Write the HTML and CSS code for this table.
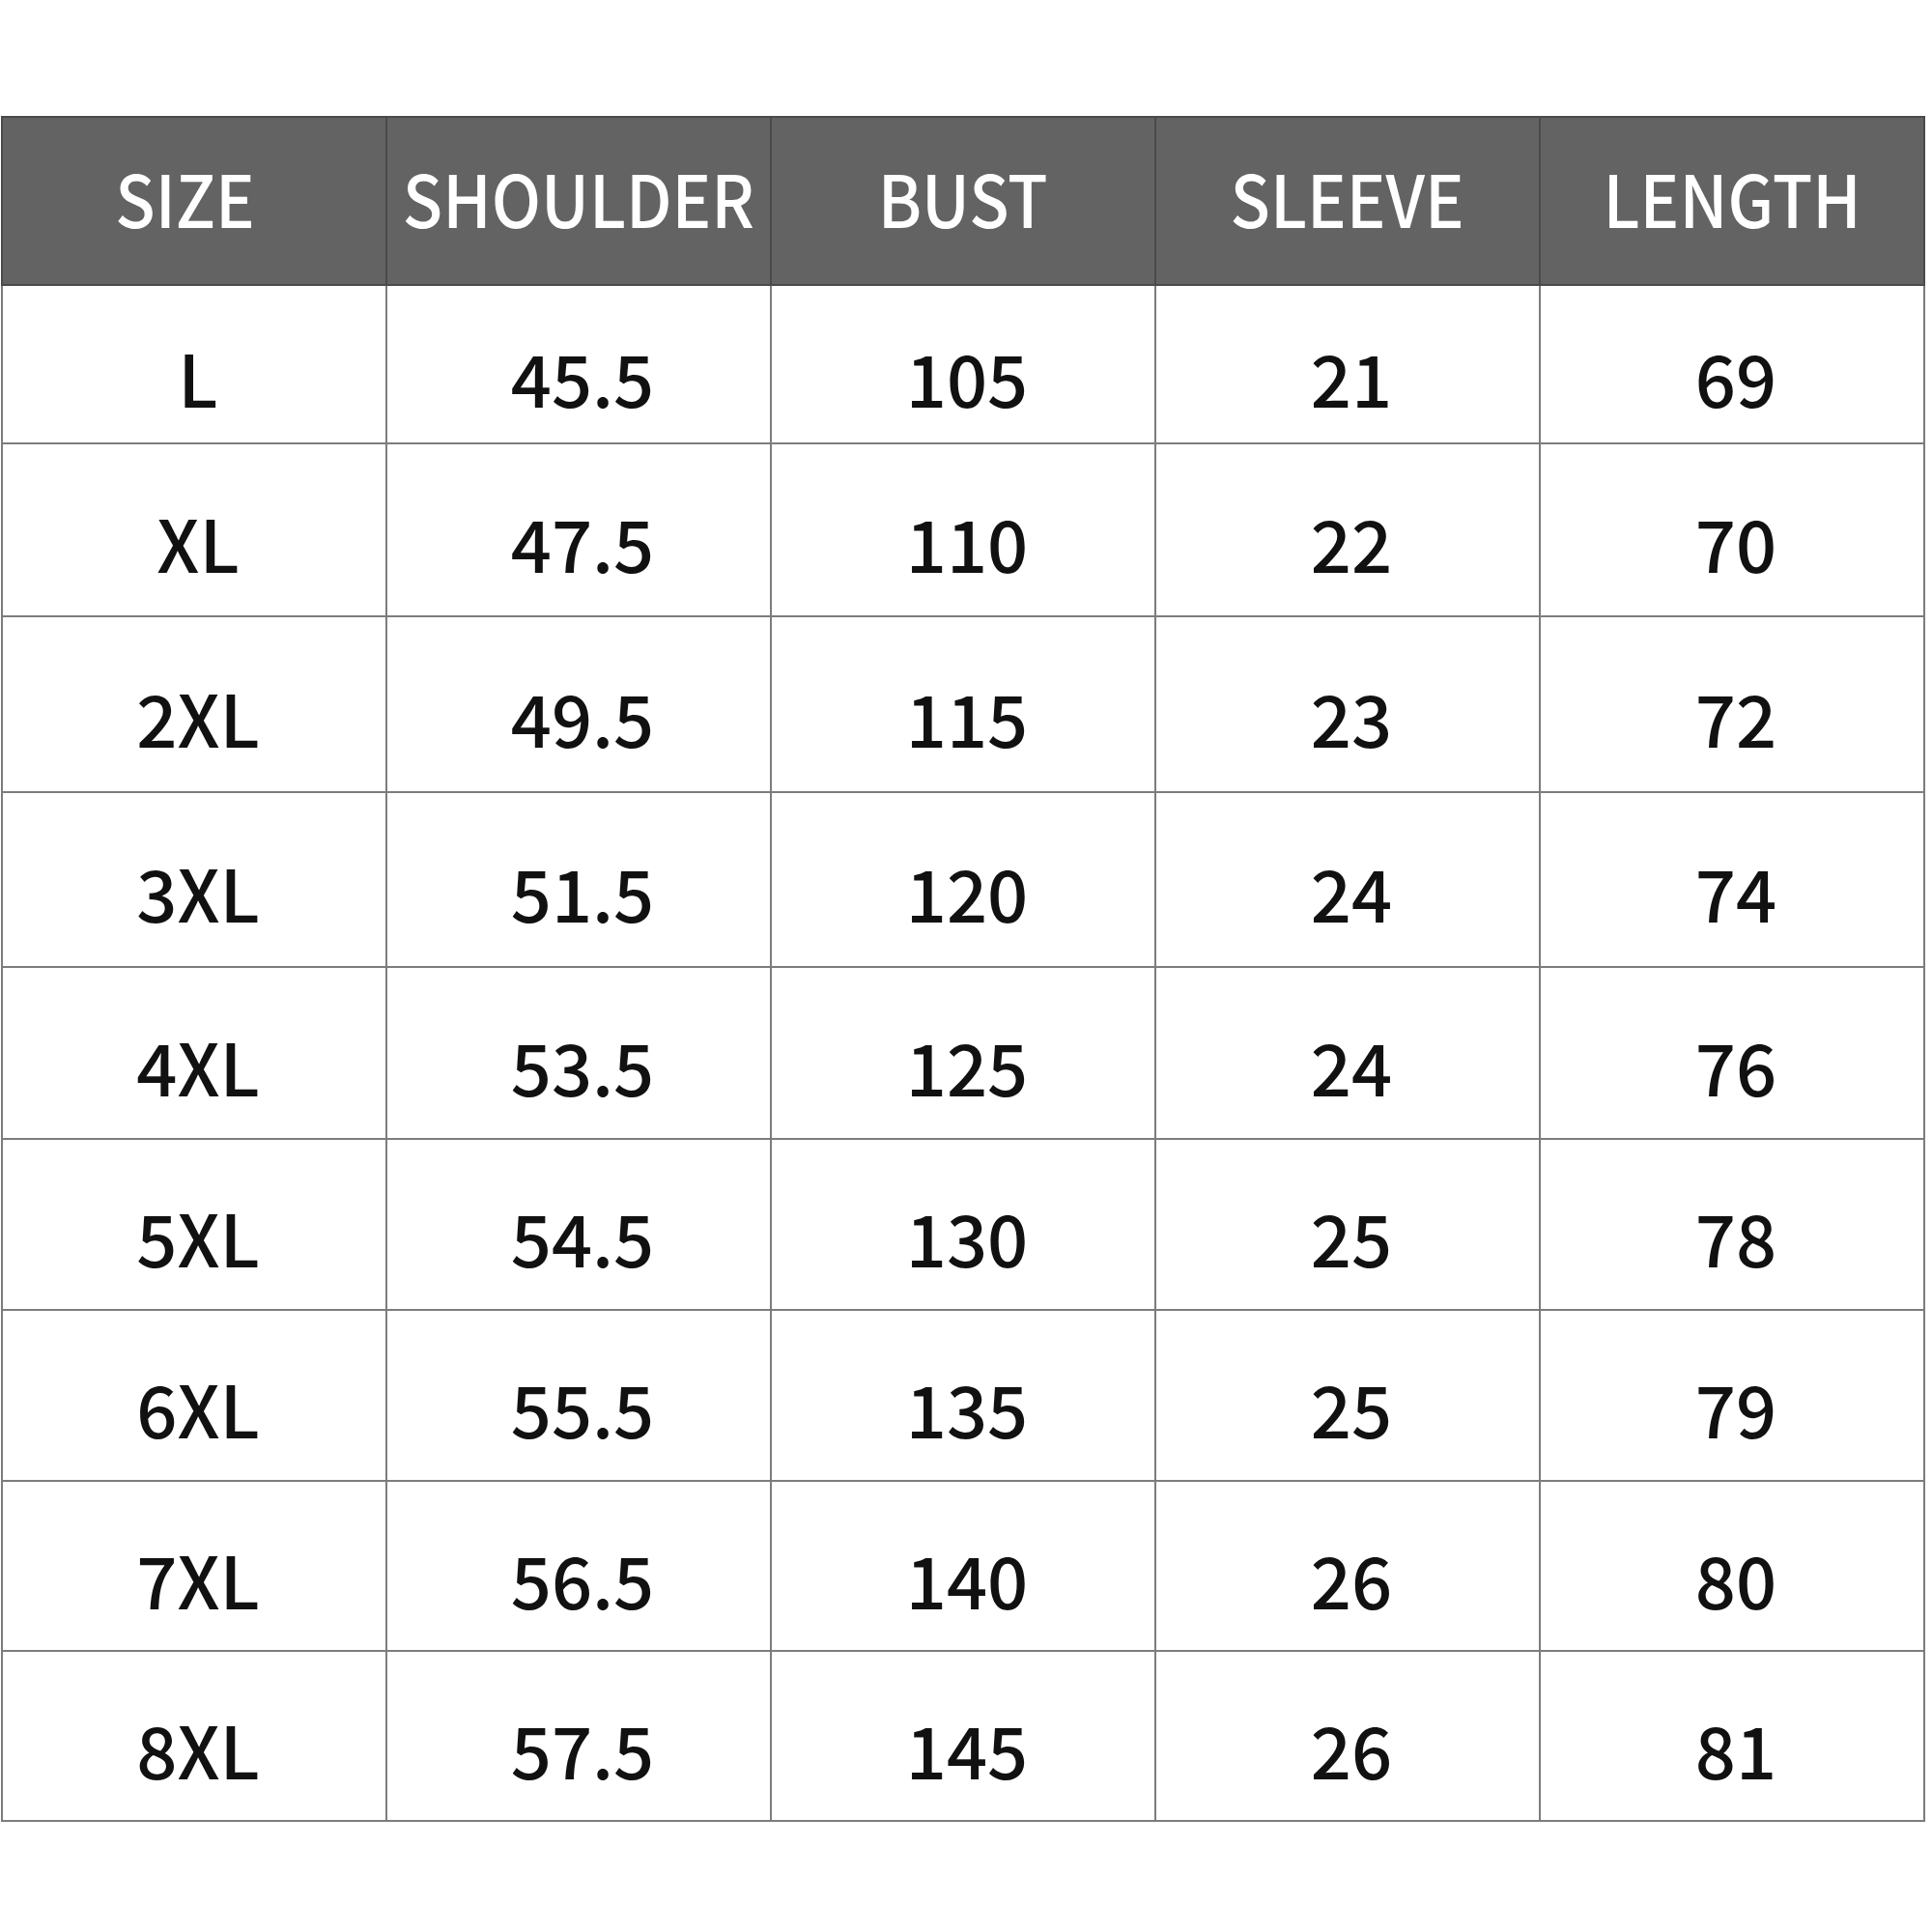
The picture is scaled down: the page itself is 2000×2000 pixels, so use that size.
FILE: index.html
```html
<!DOCTYPE html>
<html>
<head>
<meta charset="utf-8">
<link rel="stylesheet" href="styles.css">
</head>
<body>
<div class="chart">
  <div class="hd hd-first"><span>SIZE</span></div>
  <div class="hd"><span>SHOULDER</span></div>
  <div class="hd"><span>BUST</span></div>
  <div class="hd"><span>SLEEVE</span></div>
  <div class="hd"><span>LENGTH</span></div>

  <div class="cell">L</div><div class="cell">45.5</div><div class="cell">105</div><div class="cell">21</div><div class="cell">69</div>
  <div class="cell">XL</div><div class="cell">47.5</div><div class="cell">110</div><div class="cell">22</div><div class="cell">70</div>
  <div class="cell">2XL</div><div class="cell">49.5</div><div class="cell">115</div><div class="cell">23</div><div class="cell">72</div>
  <div class="cell">3XL</div><div class="cell">51.5</div><div class="cell">120</div><div class="cell">24</div><div class="cell">74</div>
  <div class="cell">4XL</div><div class="cell">53.5</div><div class="cell">125</div><div class="cell">24</div><div class="cell">76</div>
  <div class="cell">5XL</div><div class="cell">54.5</div><div class="cell">130</div><div class="cell">25</div><div class="cell">78</div>
  <div class="cell">6XL</div><div class="cell">55.5</div><div class="cell">135</div><div class="cell">25</div><div class="cell">79</div>
  <div class="cell">7XL</div><div class="cell">56.5</div><div class="cell">140</div><div class="cell">26</div><div class="cell">80</div>
  <div class="cell">8XL</div><div class="cell">57.5</div><div class="cell">145</div><div class="cell">26</div><div class="cell">81</div>
</div>
</body>
</html>
```
FILE: styles.css
```css
html, body {
  margin: 0;
  padding: 0;
  background: #ffffff;
}
body {
  width: 2000px;
  height: 2000px;
  font-family: "Noto Sans CJK SC", "Noto Sans", sans-serif;
}
.chart {
  margin: 120px 0 0 1px;
  width: 1992px;
  box-sizing: border-box;
  display: grid;
  grid-template-columns: repeat(5, minmax(0, 1fr));
  grid-template-rows: 172px 162px 177px 180px 179px 176px 175px 175px 174px 174px;
  gap: 2px;
  padding: 2px;
  background: #7c7c7c;
}
.hd {
  background: #636363;
  color: #ffffff;
  font-size: 74px;
  font-weight: 500;
  display: flex;
  align-items: center;
  justify-content: center;
  padding-bottom: 8px;
  box-sizing: border-box;
  box-shadow: 0 0 0 2px #4a4a4a;
  line-height: 1;
  white-space: nowrap;
}
.hd-first {
  padding-right: 18px;
}
.hd span {
  display: inline-block;
  transform: scaleX(0.92);
}
.cell {
  background: #ffffff;
  color: #111111;
  font-size: 74px;
  font-weight: 500;
  display: flex;
  align-items: center;
  justify-content: center;
  padding-top: 25px;
  padding-left: 8px;
  box-sizing: border-box;
  line-height: 1;
}
```
